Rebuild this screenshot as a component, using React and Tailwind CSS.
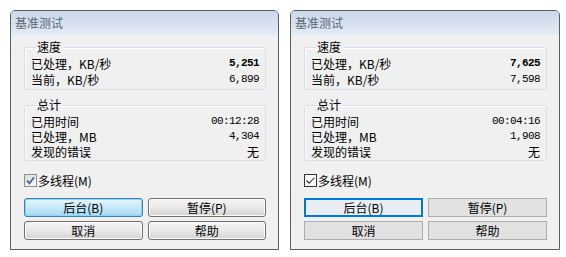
import React from 'react';

const cjk = "font-['Noto_Sans_CJK_SC','Noto_Sans',sans-serif]";
const mono = "font-['Liberation_Mono','DejaVu_Sans_Mono',monospace]";

const Row = ({ label, value, bold, h }) => (
  <div className={`flex items-center justify-between ${h}`}>
    <span className="block leading-[13px]">{label}</span>
    <span className={`block leading-[13px] ${mono} text-[11px] tracking-[-0.6px] ${bold ? 'font-bold' : ''}`}>{value}</span>
  </div>
);

const Group = ({ title, className, children }) => (
  <fieldset className={`border border-[#d5dfe5] rounded-[3px] shadow-[inset_1px_1px_0_#fff] px-[6px] ${className}`}>
    <legend className="ml-[4px] px-[2px] leading-[12px]">{title}</legend>
    {children}
  </fieldset>
);

const Check = ({ modern }) =>
  modern ? (
    <span className="w-[13px] h-[13px] border border-[#333] bg-white flex items-center justify-center">
      <svg width="11" height="11" viewBox="0 0 11 11">
        <path d="M1.5 5.5 L4.2 8.2 L9.5 2.5" fill="none" stroke="#333" strokeWidth="1.1" />
      </svg>
    </span>
  ) : (
    <span className="w-[13px] h-[13px] border border-[#8e8f8f] bg-linear-to-br from-[#dcdcdc] to-[#fbfbfb] flex items-center justify-center">
      <svg width="9" height="9" viewBox="0 0 9 9">
        <path d="M1 4.5 L3.5 7.3 L8 1.2" fill="none" stroke="#4a5f97" strokeWidth="1.8" />
      </svg>
    </span>
  );

const Btn = ({ children, modern, primary }) => {
  let cls;
  if (modern) {
    cls = primary
      ? 'border-2 border-[#0078d7] bg-[#e8eef4]'
      : 'border border-[#adadad] bg-[#e1e1e1]';
  } else {
    cls = primary
      ? 'border border-[#3c7fb1] rounded-[3px] bg-linear-to-b from-[#e8f6fd] via-[#c6e7f8] to-[#a6daf3] shadow-[inset_0_0_0_1px_#8fd3f5]'
      : 'border border-[#707070] rounded-[3px] bg-linear-to-b from-[#f4f4f4] via-[#e9e9e9] to-[#d3d3d3] shadow-[inset_0_0_0_1px_#fcfcfc]';
  }
  return (
    <div className={`h-[19px] flex items-center justify-center leading-none ${cls}`}>{children}</div>
  );
};

const Window = ({ modern, w, data }) => (
  <div className={`${w} h-[240px] border border-[#5d5d5d] rounded-t-[5px] overflow-hidden flex flex-col bg-[#f0f0f0] text-[12px] text-black ${cjk}`}>
    <div className="h-[24px] shrink-0 flex items-center pl-[4px] bg-linear-to-b from-[#c9d8ea] to-[#e4ebf4] text-[#5a6675]">
      基准测试
    </div>
    <div className="flex-1 flex flex-col pl-[13px] pr-[12px]">
      <Group title="速度" className="mt-[6px] pt-[2px] pb-[2px]">
        <Row h="h-[16px]" label="已处理，KB/秒" value={data.speed} bold />
        <Row h="h-[16px]" label="当前，KB/秒" value={data.cur} />
      </Group>
      <Group title="总计" className="mt-[9px] pt-[3px] pb-[1px]">
        <Row h="h-[15px]" label="已用时间" value={data.time} />
        <Row h="h-[15px]" label="已处理，MB" value={data.mb} />
        <div className="flex items-center justify-between h-[15px]">
          <span className="block leading-[13px]">发现的错误</span>
          <span className="block leading-[13px]">无</span>
        </div>
      </Group>
      <div className="mt-[13px] flex items-center gap-[1px] h-[13px]">
        <Check modern={modern} />
        <span className="block leading-[13px]">多线程(M)</span>
      </div>
      <div className="mt-[11px] grid grid-cols-2 gap-x-[5px] gap-y-[4px]">
        <Btn modern={modern} primary>后台(B)</Btn>
        <Btn modern={modern}>暂停(P)</Btn>
        <Btn modern={modern}>取消</Btn>
        <Btn modern={modern}>帮助</Btn>
      </div>
    </div>
  </div>
);

export default function App() {
  return (
    <div className="w-[566px] h-[257px] bg-white flex gap-[11px] pt-[10px] pl-[10px]">
      <Window w="w-[269px]" data={{ speed: '5,251', cur: '6,899', time: '00:12:28', mb: '4,304' }} />
      <Window modern w="w-[270px]" data={{ speed: '7,625', cur: '7,598', time: '00:04:16', mb: '1,908' }} />
    </div>
  );
}
